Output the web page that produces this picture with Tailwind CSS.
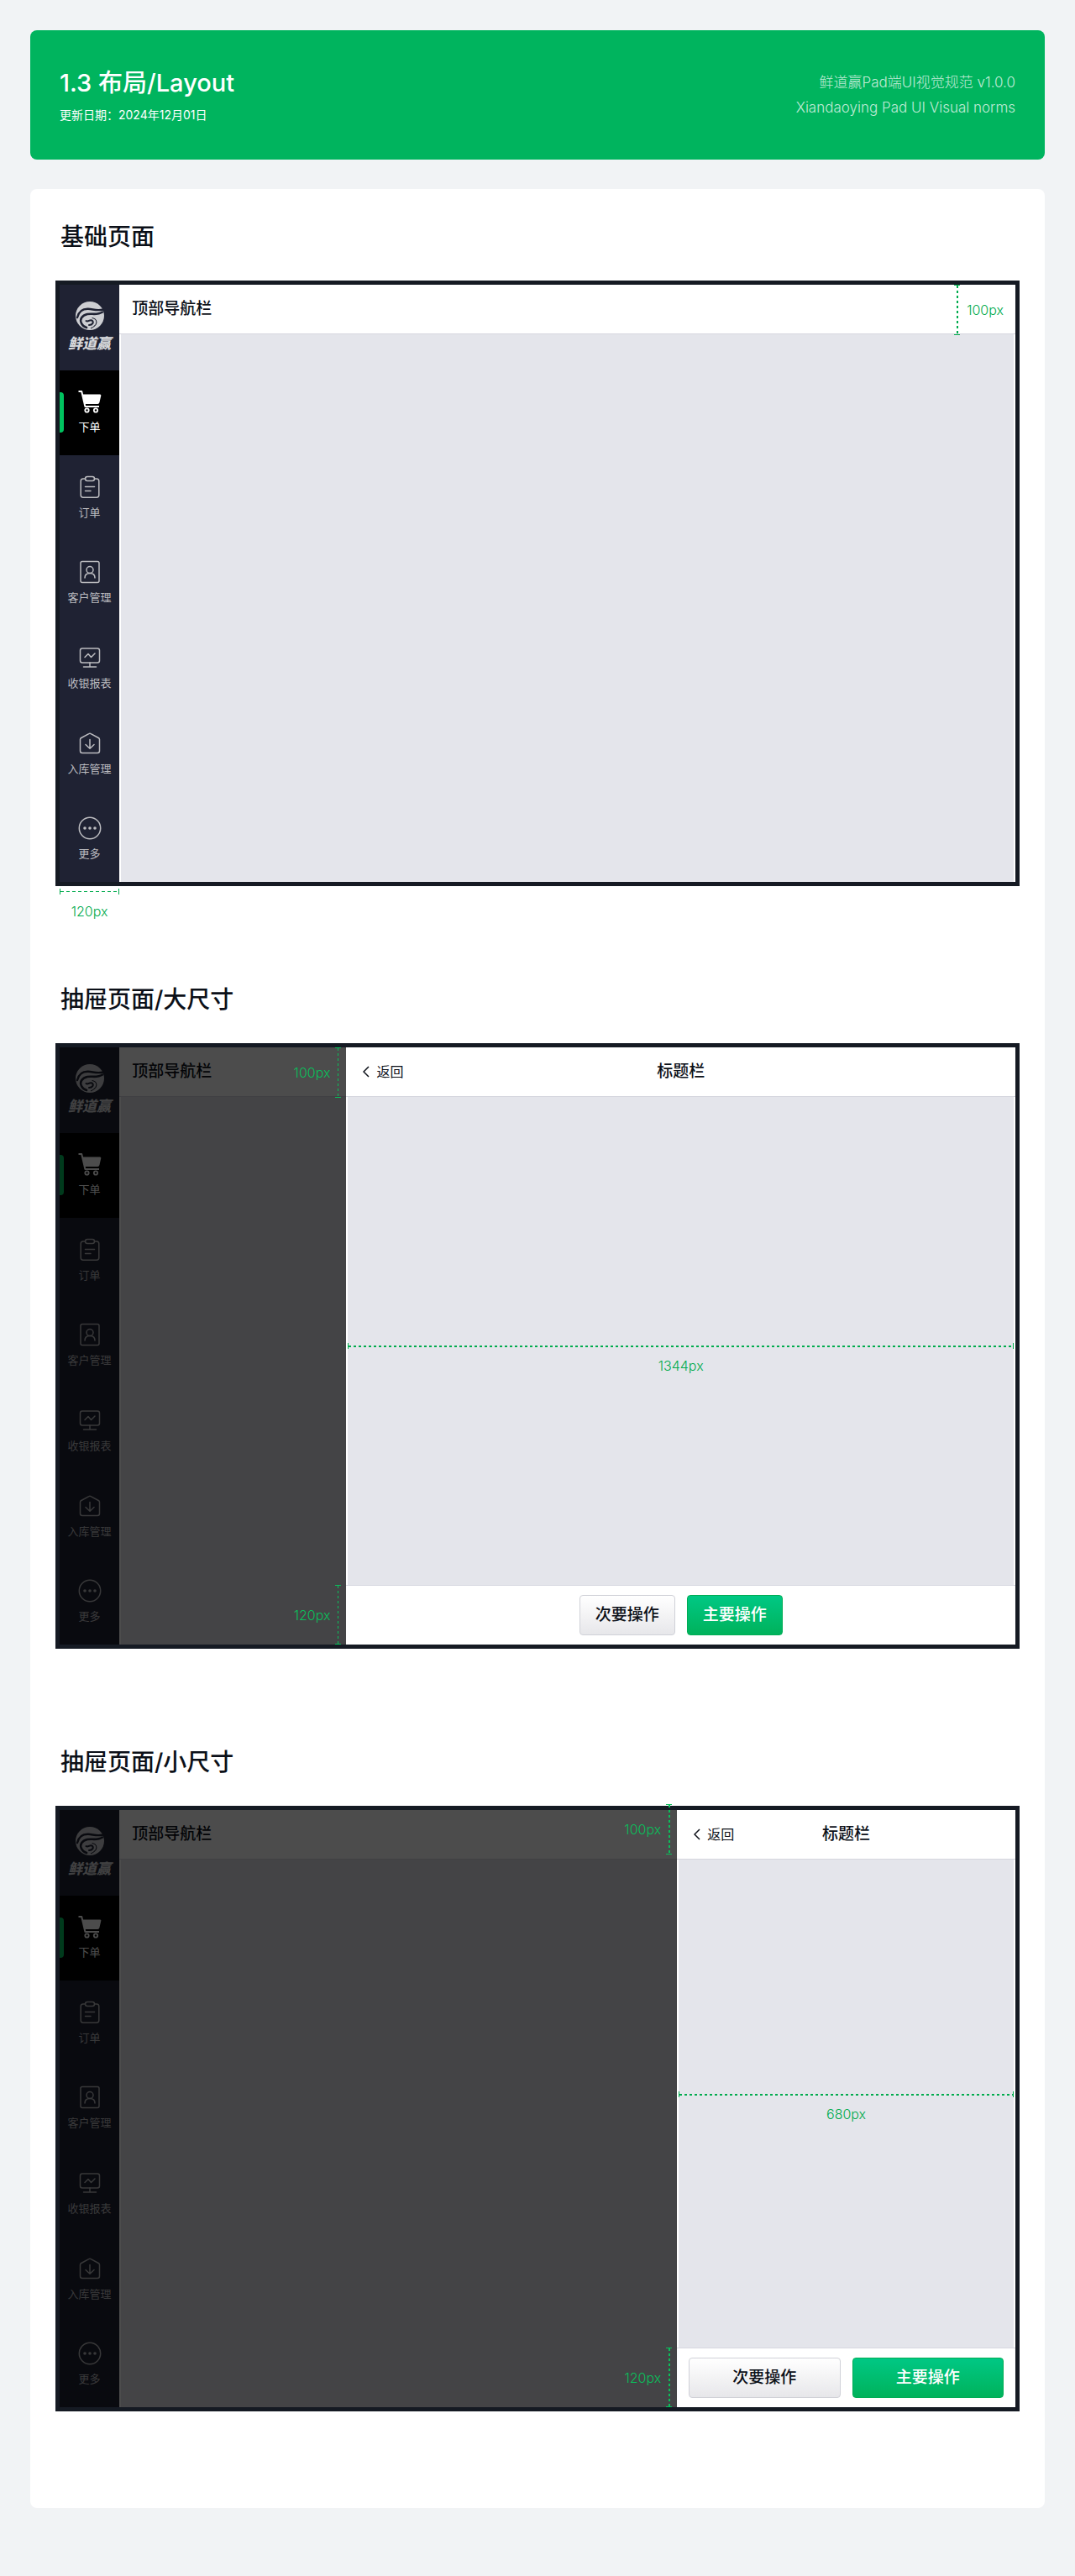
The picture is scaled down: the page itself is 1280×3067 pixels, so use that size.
<!DOCTYPE html>
<html lang="zh-CN">
<head>
  <meta charset="UTF-8" />
  <meta name="viewport" content="width=device-width, initial-scale=1.0" />
  <title>1.3 布局/Layout – 鲜道赢Pad端UI视觉规范</title>
  <script src="https://cdn.jsdelivr.net/npm/@tailwindcss/browser@4"></script>
</head>

<body class="min-h-screen bg-[#f1f3f5] px-9 pt-9 pb-20 font-['Inter','Noto_Sans_CJK_SC',sans-serif] text-[#0c1018]">

  <!-- Icons -->
  <svg class="hidden" xmlns="http://www.w3.org/2000/svg">
    <symbol id="i-logo" viewBox="0 0 34 34">
      <circle cx="17" cy="17" r="17" fill="#cdced2" />
      <g fill="none" stroke="#1f2233" stroke-linecap="round">
        <path d="M2 19C4 11 9 8.500 15 8.700C21 9 25 11.500 33 9.500" stroke-width="2.400" />
        <path d="M32 12.500C26 16.500 20 14 14 15C7.500 16.500 4.500 21 7 26C8 28.500 10 30 13 31" stroke-width="2.600" />
        <path d="M12.500 23C15 25 16.500 21 19.500 22.500C22 24.500 20.500 28 16 28" stroke-width="2" />
        <path d="M20 19.500C24.500 20.500 26 23.500 24 27.500C22.500 29.500 20.500 31 18.500 31.800" stroke-width="1.100" />
      </g>
    </symbol>
    <symbol id="i-cart" viewBox="0 0 28 28">
      <path d="M.5 2H4.200L8.400 20H25" fill="none" stroke="currentColor" stroke-width="2" stroke-linejoin="round" />
      <path d="M5.300 5.500H26Q27.600 5.500 27.300 7L25.400 15.200Q25 17 23.300 17H8Z" fill="currentColor" />
      <circle cx="10.500" cy="24.500" r="2.200" fill="none" stroke="currentColor" stroke-width="1.800" />
      <circle cx="21" cy="24.500" r="2.200" fill="none" stroke="currentColor" stroke-width="1.800" />
    </symbol>
    <symbol id="i-order" viewBox="0 0 28 28">
      <g fill="none" stroke="currentColor" stroke-width="1.500" stroke-linecap="round" stroke-linejoin="round">
        <path d="M8.500 4H6Q3.200 4 3.200 6.800V23.500Q3.200 26.200 6 26.200H22Q24.800 26.200 24.800 23.500V6.800Q24.800 4 22 4H19.500" />
        <rect x="8.500" y="1.500" width="11" height="5" rx="2.500" />
        <path d="M8.500 13.500H19.500M8.500 18.500H15" />
      </g>
    </symbol>
    <symbol id="i-customer" viewBox="0 0 28 28">
      <g fill="none" stroke="currentColor" stroke-width="1.500" stroke-linecap="round" stroke-linejoin="round">
        <rect x="3" y="1.500" width="22" height="25" rx="2" />
        <circle cx="14" cy="11.500" r="4" />
        <path d="M8 21C8 17.500 10.500 15.500 14 15.500S20 17.500 20 21" />
      </g>
    </symbol>
    <symbol id="i-report" viewBox="0 0 28 28">
      <g fill="none" stroke="currentColor" stroke-width="1.500" stroke-linecap="round" stroke-linejoin="round">
        <rect x="2.500" y="3" width="23" height="17" rx="2.500" />
        <path d="M8 13.500L12 9.500L15.500 13.500L20 9M14 20V25M6.500 25H21.500" />
      </g>
    </symbol>
    <symbol id="i-stock" viewBox="0 0 28 28">
      <g fill="none" stroke="currentColor" stroke-width="1.500" stroke-linecap="round" stroke-linejoin="round">
        <path d="M2.500 9.500Q2.500 8.200 3.800 7.500L12.800 2.700Q14 2 15.200 2.700L24.200 7.500Q25.500 8.200 25.500 9.500V23Q25.500 25.500 23 25.500H5Q2.500 25.500 2.500 23Z" />
        <path d="M14 9.500V20M9 15.500L14 20.200L19 15.500" />
      </g>
    </symbol>
    <symbol id="i-more" viewBox="0 0 28 28">
      <circle cx="14" cy="14" r="12.700" fill="none" stroke="currentColor" stroke-width="1.500" />
      <circle cx="8" cy="14" r="1.800" fill="currentColor" />
      <circle cx="14" cy="14" r="1.800" fill="currentColor" />
      <circle cx="20" cy="14" r="1.800" fill="currentColor" />
    </symbol>
    <symbol id="i-back" viewBox="0 0 8 14">
      <path d="M7 1L1 7L7 13" fill="none" stroke="currentColor" stroke-width="1.500" />
    </symbol>
  </svg>

  <header class="flex items-center justify-between rounded-lg bg-[#00b45e] px-[35px] py-[43px] text-white">
    <div>
      <h1 class="text-[29px] leading-10 font-medium">1.3 布局/Layout</h1>
      <p class="mt-2 text-sm leading-5">更新日期：2024年12月01日</p>
    </div>
    <div class="text-right text-[17px] leading-[30px] font-light text-white/75">
      <p>鲜道赢Pad端UI视觉规范 v1.0.0</p>
      <p>Xiandaoying Pad UI Visual norms</p>
    </div>
  </header>

  <main class="mt-[35px] rounded-lg bg-white px-[30px] pt-[37px]">

    <!-- 基础页面 -->
    <section class="pb-[115px]">
      <h2 class="mb-8 px-1.5 text-[28px] leading-10 font-medium">基础页面</h2>
      <div class="relative aspect-[1148/721] border-5 border-[#151a23]">
        <div class="h-full" data-shell></div>
        <div class="absolute top-0 right-3.5 flex h-[60px] items-center gap-2 text-[#00ab4d]">
          <div class="flex h-full w-[7px] justify-center border-y border-current">
            <span class="w-0.5 bg-[repeating-linear-gradient(180deg,#00ab4d_0_3px,transparent_3px_6px)]"></span>
          </div>
          <span class="text-base leading-6 font-light">100px</span>
        </div>
        <div class="absolute top-full left-0 mt-2 w-[6.25%] text-center text-[#00ab4d]">
          <div class="flex h-[7px] flex-col justify-center border-x border-current">
            <span class="h-px bg-[repeating-linear-gradient(90deg,#00ab4d_0_4px,transparent_4px_7px)]"></span>
          </div>
          <p class="mt-2 text-base leading-6 font-light">120px</p>
        </div>
      </div>
    </section>

    <!-- 抽屉页面/大尺寸 -->
    <section class="pb-[115px]">
      <h2 class="mb-8 px-1.5 text-[28px] leading-10 font-medium">抽屉页面/大尺寸</h2>
      <div class="relative aspect-[1148/721] border-5 border-[#151a23]">
        <div class="h-full" data-shell></div>
        <div class="absolute inset-0 flex bg-black/70">
          <div class="flex flex-1 flex-col items-end justify-between pr-1.5 text-[#0abf5b]">
            <div class="flex h-[60px] items-center gap-1.5">
              <span class="text-base leading-6 font-light">100px</span>
              <div class="flex h-full w-[7px] justify-center border-y border-current">
                <span class="w-px bg-[repeating-linear-gradient(180deg,#0abf5b_0_3px,transparent_3px_6px)]"></span>
              </div>
            </div>
            <div class="flex h-[71px] items-center gap-1.5">
              <span class="text-base leading-6 font-light">120px</span>
              <div class="flex h-full w-[7px] justify-center border-y border-current">
                <span class="w-px bg-[repeating-linear-gradient(180deg,#0abf5b_0_3px,transparent_3px_6px)]"></span>
              </div>
            </div>
          </div>
          <div class="flex w-[70%] flex-col bg-white">
            <div class="grid h-[59px] grid-cols-[1fr_auto_1fr] items-center border-b border-[#d6d7df] px-5">
              <button class="flex items-center gap-2 justify-self-start text-base leading-6">
                <svg class="h-3.5 w-2"><use href="#i-back" /></svg>返回
              </button>
              <h3 class="text-[19px] leading-7 font-medium">标题栏</h3>
            </div>
            <div class="mx-0.5 flex flex-1 flex-col justify-center bg-[#e4e5eb] pt-11 text-[#00ab4d]">
              <div class="flex h-[7px] flex-col justify-center border-x border-current">
                <span class="h-0.5 bg-[repeating-linear-gradient(90deg,#00ab4d_0_3px,transparent_3px_6px)]"></span>
              </div>
              <p class="mt-2 text-center text-base leading-6 font-light">1344px</p>
            </div>
            <div class="flex h-[71px] items-center justify-center gap-3.5 border-t border-[#d6d7df]">
              <button class="h-12 w-[114px] rounded border border-[#d0d1d8] bg-linear-to-b from-white to-[#e7e7ea] text-[19px] leading-7 font-medium">次要操作</button>
              <button class="h-12 w-[114px] rounded border border-[#00ad55] bg-linear-to-b from-[#00c884] to-[#00b25b] text-[19px] leading-7 font-medium text-white">主要操作</button>
            </div>
          </div>
        </div>
      </div>
    </section>

    <!-- 抽屉页面/小尺寸 -->
    <section class="pb-[115px]">
      <h2 class="mb-8 px-1.5 text-[28px] leading-10 font-medium">抽屉页面/小尺寸</h2>
      <div class="relative aspect-[1148/721] border-5 border-[#151a23]">
        <div class="h-full" data-shell></div>
        <div class="absolute inset-0 flex bg-black/70">
          <div class="flex flex-1 flex-col items-end justify-between pr-1.5 text-[#0abf5b]">
            <div class="-mt-[7px] flex h-[60px] items-center gap-1.5">
              <span class="text-base leading-6 font-light">100px</span>
              <div class="flex h-full w-[7px] justify-center border-y border-current">
                <span class="w-0.5 bg-[repeating-linear-gradient(180deg,#0abf5b_0_3px,transparent_3px_6px)]"></span>
              </div>
            </div>
            <div class="flex h-[71px] items-center gap-1.5">
              <span class="text-base leading-6 font-light">120px</span>
              <div class="flex h-full w-[7px] justify-center border-y border-current">
                <span class="w-0.5 bg-[repeating-linear-gradient(180deg,#0abf5b_0_3px,transparent_3px_6px)]"></span>
              </div>
            </div>
          </div>
          <div class="flex w-[35.4%] flex-col bg-white">
            <div class="grid h-[59px] grid-cols-[1fr_auto_1fr] items-center border-b border-[#d6d7df] px-5">
              <button class="flex items-center gap-2 justify-self-start text-base leading-6">
                <svg class="h-3.5 w-2"><use href="#i-back" /></svg>返回
              </button>
              <h3 class="text-[19px] leading-7 font-medium">标题栏</h3>
            </div>
            <div class="mx-0.5 flex flex-1 flex-col justify-center bg-[#e4e5eb] pt-2.5 text-[#00ab4d]">
              <div class="flex h-[7px] flex-col justify-center border-x border-current">
                <span class="h-0.5 bg-[repeating-linear-gradient(90deg,#00ab4d_0_3px,transparent_3px_6px)]"></span>
              </div>
              <p class="mt-2 text-center text-base leading-6 font-light">680px</p>
            </div>
            <div class="flex h-[71px] items-center gap-3.5 border-t border-[#d6d7df] px-3.5">
              <button class="h-12 flex-1 rounded border border-[#d0d1d8] bg-linear-to-b from-white to-[#e7e7ea] text-[19px] leading-7 font-medium">次要操作</button>
              <button class="h-12 flex-1 rounded border border-[#00ad55] bg-linear-to-b from-[#00c884] to-[#00b25b] text-[19px] leading-7 font-medium text-white">主要操作</button>
            </div>
          </div>
        </div>
      </div>
    </section>
  </main>

  <!-- App shell: sidebar + top bar, shared by the three frames -->
  <template id="shell">
    <div class="flex h-full">
      <nav class="grid w-[6.25%] shrink-0 grid-cols-1 grid-rows-7 bg-[#1f2233] text-[13px] leading-5 text-[#bcbcc0]">
        <div class="flex flex-col items-center pt-5">
          <svg class="size-[34px]"><use href="#i-logo" /></svg>
          <span class="mt-1 text-[17px] leading-6 font-black text-[#d6d7da] italic">鲜道赢</span>
        </div>
        <a href="#" class="relative flex flex-col items-center justify-center gap-1.5 bg-black text-white">
          <i class="absolute left-0 h-12 w-[5px] rounded-r bg-[#00c35f]"></i>
          <svg class="size-7"><use href="#i-cart" /></svg>下单
        </a>
        <a href="#" class="flex flex-col items-center justify-center gap-1.5"><svg class="size-7"><use href="#i-order" /></svg>订单</a>
        <a href="#" class="flex flex-col items-center justify-center gap-1.5"><svg class="size-7"><use href="#i-customer" /></svg>客户管理</a>
        <a href="#" class="flex flex-col items-center justify-center gap-1.5"><svg class="size-7"><use href="#i-report" /></svg>收银报表</a>
        <a href="#" class="flex flex-col items-center justify-center gap-1.5"><svg class="size-7"><use href="#i-stock" /></svg>入库管理</a>
        <a href="#" class="flex flex-col items-center justify-center gap-1.5"><svg class="size-7"><use href="#i-more" /></svg>更多</a>
      </nav>
      <div class="flex flex-1 flex-col bg-white">
        <div class="flex h-[59px] items-center border-b border-[#d6d7df] px-[15px]">
          <h3 class="text-[19px] leading-7 font-medium">顶部导航栏</h3>
        </div>
        <div class="mx-0.5 flex-1 bg-[#e4e5eb]"></div>
      </div>
    </div>
  </template>

  <script>
    const shell = document.getElementById('shell');
    document.querySelectorAll('[data-shell]').forEach(el => {
      el.appendChild(shell.content.cloneNode(true));
    });
  </script>
</body>
</html>
